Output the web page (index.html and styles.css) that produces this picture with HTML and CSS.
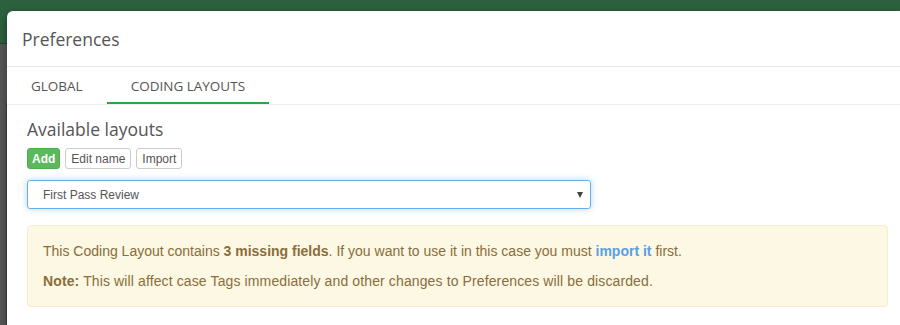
FILE: index.html
```html
<!DOCTYPE html>
<html lang="en">
<head>
  <meta charset="UTF-8" />
  <title>Preferences</title>
  <link rel="stylesheet" href="styles.css">
</head>
<body>

<div class="page">
  <div class="navbar"></div>
  <div class="page-body">
    <div class="band light"></div>
    <div class="band dark"></div>
  </div>
</div>

<div class="modal">
  <div class="modal-header">
    <h4 class="modal-title">Preferences</h4>
  </div>

  <ul class="tabs">
    <li class="tab">Global</li>
    <li class="tab active">Coding Layouts</li>
  </ul>

  <div class="modal-body">
    <h3 class="section-title">Available layouts</h3>
    <div class="btn-row">
      <button class="btn btn-success">Add</button>
      <button class="btn">Edit name</button>
      <button class="btn">Import</button>
    </div>

    <div class="select">
      <span>First Pass Review</span>
      <span class="caret"></span>
    </div>

    <div class="alert">
      <p>This Coding Layout contains <b>3 missing fields</b>. If you want to use it in this case you must <a href="#">import it</a> first.</p>
      <p class="note"><b>Note:</b> This will affect case Tags immediately and other changes to Preferences will be discarded.</p>
    </div>
  </div>
</div>

</body>
</html>
```

FILE: styles.css
```css
body {
  margin: 0;
  padding: 0;
  width: 900px;
  height: 325px;
  overflow: hidden;
  position: relative;
  font-family: 'Liberation Sans', Arial, sans-serif;
  background-color: #3c3c3c;
}

.page {
  display: flex;
  flex-direction: column;
  height: 325px;
}

.navbar {
  height: 43px;
  background-color: #2c603f;
  border-bottom: 1px solid #1e4a2e;
}

.page-body {
  flex: 1;
  display: flex;
  flex-direction: column;
  border-left: 6px solid #575757;
}

.band.light {
  height: 59px;
  background-color: #5a5a5a;
}

.band.dark {
  flex: 1;
  background-color: #404040;
}

/* dialog sits over the dimmed page */
.modal {
  position: absolute;
  top: 11px;
  left: 7px;
  right: 0;
  bottom: 0;
  overflow: hidden;
  background-color: #fff;
  border-radius: 6px 0 0 0;
  box-shadow: 0 3px 9px rgba(0, 0, 0, 0.4);
}

.modal-header {
  height: 55px;
  padding: 0 15px;
  display: flex;
  align-items: center;
  border-bottom: 1px solid #e5e5e5;
}

.modal-title {
  margin: 0;
  font-family: 'Open Sans', sans-serif;
  font-size: 17.5px;
  font-weight: 400;
  color: #555;
}

.tabs {
  display: flex;
  margin: 0;
  padding: 0;
  list-style: none;
  border-bottom: 1px solid #eee;
}

.tab {
  padding: 10px 24px 7px;
  font-family: 'Open Sans', sans-serif;
  font-size: 13.5px;
  text-transform: uppercase;
  color: #555;
  border-bottom: 2px solid transparent;
}

.tab.active {
  border-bottom-color: #28a745;
}

.modal-body {
  padding: 12px 13px 20px 20px;
}

.section-title {
  margin: 0 0 7px;
  font-family: 'Open Sans', sans-serif;
  font-size: 17.5px;
  font-weight: 400;
  color: #555;
}

.btn-row {
  display: flex;
  gap: 5px;
  margin-bottom: 11px;
}

.btn {
  height: 21px;
  padding: 0 5px;
  font-family: 'Liberation Sans', Arial, sans-serif;
  font-size: 12px;
  color: #555;
  background-color: #fff;
  border: 1px solid #ccc;
  border-radius: 3px;
}

.btn-success {
  padding: 0 4px;
  color: #fff;
  font-weight: bold;
  background-color: #5cb85c;
  border-color: #4cae4c;
}

.select {
  width: 564px;
  height: 29px;
  box-sizing: border-box;
  padding: 0 7px 0 15px;
  display: flex;
  align-items: center;
  justify-content: space-between;
  font-size: 12px;
  color: #555;
  border: 1px solid #66afe9;
  border-radius: 3px;
  box-shadow: 0 0 6px rgba(102, 175, 233, 0.5);
}

.caret {
  width: 0;
  height: 0;
  border-left: 3px solid transparent;
  border-right: 3px solid transparent;
  border-top: 6px solid #444;
}

.alert {
  margin-top: 16px;
  width: 861px;
  box-sizing: border-box;
  padding: 15px 15px 15px;
  font-size: 14px;
  line-height: 20px;
  color: #8a6d3b;
  background-color: #fcf8e3;
  border: 1px solid #faebcc;
  border-radius: 4px;
}

.alert p {
  margin: 0 0 10px;
}

.alert p:last-child {
  margin-bottom: 0;
}

.alert .note {
  letter-spacing: 0.12px;
}

.alert a {
  color: #5a9fe6;
  font-weight: bold;
  text-decoration: none;
}
```
